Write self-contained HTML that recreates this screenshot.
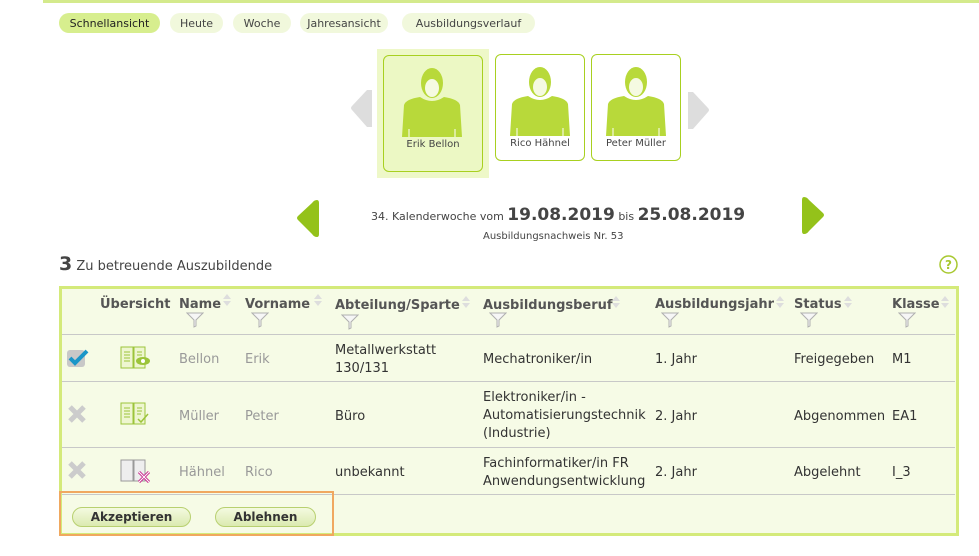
<!DOCTYPE html>
<html><head><meta charset="utf-8"><style>
*{margin:0;padding:0;box-sizing:border-box}
body{width:979px;height:556px;background:#fff;font-family:"DejaVu Sans","Liberation Sans",sans-serif;color:#444;position:relative;overflow:hidden}
.a{position:absolute;white-space:nowrap}
.tab{position:absolute;top:13px;height:20px;border-radius:10px;background:#f1f8dc;font-size:11px;line-height:21px;text-align:center;color:#444}
.card{position:absolute;border:1px solid #a8d020;border-radius:6px;background:#fff}
.cn{position:absolute;left:0;right:0;font-size:10px;text-align:center;color:#444}
.th{position:absolute;top:297px;font-size:13px;font-weight:bold;color:#555;white-space:nowrap}
.td{position:absolute;font-size:13px;color:#333;line-height:18px;white-space:nowrap}
.g{color:#999}
.hl{position:absolute;left:62px;width:893px;height:1px;background:#c8c8c8}
.btn{position:absolute;top:507px;height:20px;border:1px solid #b8d070;border-radius:10px;background:linear-gradient(#f4fae0,#dbeab0);font-size:12px;font-weight:bold;line-height:18px;text-align:center;color:#333}
</style></head><body>
<div class="a" style="left:43px;top:0;width:936px;height:3px;background:#d4ea8c"></div>
<div class="tab" style="left:59px;width:101px;background:#d7ee8e;color:#222">Schnellansicht</div>
<div class="tab" style="left:170px;width:53px">Heute</div>
<div class="tab" style="left:233px;width:58px">Woche</div>
<div class="tab" style="left:300px;width:88px">Jahresansicht</div>
<div class="tab" style="left:402px;width:133px">Ausbildungsverlauf</div>

<svg class="a" style="left:350px;top:90px" width="24" height="37"><path d="M22 0 L22 37 L17 37 L2 20 Q0 18 2 16 L17 0Z" fill="#ddd"/></svg>
<svg class="a" style="left:686px;top:92px" width="24" height="37"><path d="M2 0 L2 37 L7 37 L22 20 Q24 18 22 16 L7 0Z" fill="#ddd"/></svg>

<div class="a" style="left:377px;top:49px;width:112px;height:129px;background:#eef8c8"></div>
<div class="card" style="left:383px;top:55px;width:100px;height:117px;background:#ecf8c4"><div class="cn" style="top:83px">Erik Bellon</div></div>
<div class="card" style="left:495px;top:54px;width:90px;height:107px"><div class="cn" style="top:83px">Rico Hähnel</div></div>
<div class="card" style="left:591px;top:54px;width:90px;height:107px"><div class="cn" style="top:83px">Peter Müller</div></div>
<svg width="0" height="0" style="position:absolute"><defs><g id="av"><ellipse cx="32" cy="16" rx="11" ry="15" fill="#b8d93a"/><ellipse cx="32" cy="21" rx="7" ry="9" fill="#fff" opacity="0.85"/><path d="M24 14 Q32 8 40 14 L40 10 Q32 3 24 10Z" fill="#b8d93a"/><path d="M4 38 Q6 32 20 30 Q32 38 44 30 Q58 32 60 38 L62 70 L2 70Z" fill="#b8d93a"/><path d="M9 62 V70 M55 62 V70" stroke="#fff" stroke-width="1"/></g></defs></svg>
<svg class="a" style="left:400px;top:67px" width="64" height="70"><use href="#av"/></svg>
<svg class="a" style="left:508px;top:66px" width="64" height="70"><use href="#av"/></svg>
<svg class="a" style="left:604px;top:66px" width="64" height="70"><use href="#av"/></svg>

<svg class="a" style="left:296px;top:200px" width="23" height="37"><path d="M21 0 Q23 0 23 3 L23 34 Q23 37 21 37 Q18 37 16 34 L2 20 Q0 18 2 16 L16 3 Q18 0 21 0Z" fill="#94c21a"/></svg>
<svg class="a" style="left:802px;top:197px" width="23" height="37"><path d="M2 0 Q0 0 0 3 L0 34 Q0 37 2 37 Q5 37 7 34 L21 20 Q23 18 21 16 L7 3 Q5 0 2 0Z" fill="#94c21a"/></svg>
<div class="a" style="left:371px;top:205px;font-size:11px;color:#444">34. Kalenderwoche vom <b style="font-size:17px;color:#444">19.08.2019</b> bis <b style="font-size:17px;color:#444">25.08.2019</b></div>
<div class="a" style="left:483px;top:231px;font-size:10px;color:#444">Ausbildungsnachweis Nr. 53</div>

<div class="a" style="left:59px;top:253px;font-size:13px;color:#444"><b style="font-size:19px">3</b> Zu betreuende Auszubildende</div>
<svg class="a" style="left:938px;top:254px" width="21" height="21"><circle cx="10.5" cy="10.5" r="8.5" fill="none" stroke="#a8c830" stroke-width="1.5"/><text x="10.5" y="15" font-size="12" font-weight="bold" text-anchor="middle" fill="#a8c830" font-family="DejaVu Sans">?</text></svg>

<div class="a" style="left:59px;top:286px;width:900px;height:250px;border:3px solid #d4ea7a;background:#f6fbe6"></div>
<div class="hl" style="top:334px"></div>
<div class="hl" style="top:381px"></div>
<div class="hl" style="top:447px"></div>
<div class="hl" style="top:494px"></div>

<div class="th" style="left:100px">Übersicht</div>
<div class="th" style="left:179px">Name</div>
<div class="th" style="left:245px">Vorname</div>
<div class="th" style="left:335px;top:298px">Abteilung/Sparte</div>
<div class="th" style="left:483px;top:298px">Ausbildungsberuf</div>
<div class="th" style="left:655px">Ausbildungsjahr</div>
<div class="th" style="left:794px">Status</div>
<div class="th" style="left:892px">Klasse</div>
<svg width="0" height="0" style="position:absolute"><defs><g id="so"><path d="M1 5 L5 0 L9 5Z M1 7 L9 7 L5 12Z" fill="#ddd"/></g><g id="fi"><path d="M1 1 L17 1 L10 8 L10 14 L8 15 L8 8Z" fill="#f6f6f6" stroke="#b0b0b0"/></g></defs></svg>
<svg class="a" style="left:222px;top:294px" width="10" height="12"><use href="#so"/></svg>
<svg class="a" style="left:313px;top:294px" width="10" height="12"><use href="#so"/></svg>
<svg class="a" style="left:461px;top:296px" width="10" height="12"><use href="#so"/></svg>
<svg class="a" style="left:611px;top:296px" width="10" height="12"><use href="#so"/></svg>
<svg class="a" style="left:775px;top:296px" width="10" height="12"><use href="#so"/></svg>
<svg class="a" style="left:843px;top:296px" width="10" height="12"><use href="#so"/></svg>
<svg class="a" style="left:940px;top:296px" width="10" height="12"><use href="#so"/></svg>
<svg class="a" style="left:186px;top:312px" width="18" height="16"><use href="#fi"/></svg>
<svg class="a" style="left:251px;top:312px" width="18" height="16"><use href="#fi"/></svg>
<svg class="a" style="left:341px;top:314px" width="18" height="16"><use href="#fi"/></svg>
<svg class="a" style="left:489px;top:312px" width="18" height="16"><use href="#fi"/></svg>
<svg class="a" style="left:661px;top:312px" width="18" height="16"><use href="#fi"/></svg>
<svg class="a" style="left:800px;top:312px" width="18" height="16"><use href="#fi"/></svg>
<svg class="a" style="left:898px;top:312px" width="18" height="16"><use href="#fi"/></svg>

<!-- row1 -->
<svg class="a" style="left:67px;top:348px" width="22" height="20"><rect x="0" y="2" width="18" height="17" rx="3" fill="#c8c8c8"/><path d="M3 10 L8 15 L20 3" fill="none" stroke="#1a96c8" stroke-width="4"/></svg>
<svg class="a" style="left:120px;top:346px" width="30" height="24"><path d="M1 1 H13 V22 H1Z M14 1 H25 V22 H14Z" fill="#eef6d0" stroke="#9cc43a"/><path d="M4 6H10M4 9H10M4 12H10M4 15H10M17 6H22M17 9H22" stroke="#9cc43a"/><ellipse cx="23" cy="15" rx="7" ry="4" fill="#9cc43a"/><circle cx="23" cy="15" r="2" fill="#fff"/></svg>
<div class="td g" style="left:179px;top:351px">Bellon</div>
<div class="td g" style="left:245px;top:351px">Erik</div>
<div class="td" style="left:335px;top:342px">Metallwerkstatt<br>130/131</div>
<div class="td" style="left:483px;top:351px">Mechatroniker/in</div>
<div class="td" style="left:655px;top:351px">1. Jahr</div>
<div class="td" style="left:794px;top:351px">Freigegeben</div>
<div class="td" style="left:892px;top:351px">M1</div>
<!-- row2 -->
<svg class="a" style="left:68px;top:405px" width="18" height="18"><path d="M2 2 L16 16 M16 2 L2 16" stroke="#ccc" stroke-width="5"/></svg>
<svg class="a" style="left:120px;top:402px" width="30" height="24"><path d="M1 1 H13 V22 H1Z M14 1 H25 V22 H14Z" fill="#eef6d0" stroke="#9cc43a"/><path d="M4 6H10M4 9H10M4 12H10M4 15H10M17 6H22M17 9H22M17 12H21" stroke="#9cc43a"/><path d="M18 17 L21 20 L28 12" fill="none" stroke="#9cc43a" stroke-width="1.5"/></svg>
<div class="td g" style="left:179px;top:408px">Müller</div>
<div class="td g" style="left:245px;top:408px">Peter</div>
<div class="td" style="left:335px;top:408px">Büro</div>
<div class="td" style="left:483px;top:389px">Elektroniker/in -<br>Automatisierungstechnik<br>(Industrie)</div>
<div class="td" style="left:655px;top:408px">2. Jahr</div>
<div class="td" style="left:794px;top:408px">Abgenommen</div>
<div class="td" style="left:892px;top:408px">EA1</div>
<!-- row3 -->
<svg class="a" style="left:68px;top:461px" width="18" height="18"><path d="M2 2 L16 16 M16 2 L2 16" stroke="#ccc" stroke-width="5"/></svg>
<svg class="a" style="left:120px;top:459px" width="32" height="24"><path d="M1 1 H13 V22 H1Z M14 1 H25 V22 H14Z" fill="#eee" stroke="#999"/><path d="M19 13 L29 23 M29 13 L19 23" stroke="#c8288c" stroke-width="3"/><path d="M19 13 L29 23 M29 13 L19 23" stroke="#fff" stroke-width="1"/></svg>
<div class="td g" style="left:179px;top:464px">Hähnel</div>
<div class="td g" style="left:245px;top:464px">Rico</div>
<div class="td" style="left:335px;top:464px">unbekannt</div>
<div class="td" style="left:483px;top:455px">Fachinformatiker/in FR<br>Anwendungsentwicklung</div>
<div class="td" style="left:655px;top:464px">2. Jahr</div>
<div class="td" style="left:794px;top:464px">Abgelehnt</div>
<div class="td" style="left:892px;top:464px">I_3</div>

<div class="a" style="left:59px;top:491px;width:275px;height:45px;border:2px solid #f0a860"></div>
<div class="btn" style="left:72px;width:119px">Akzeptieren</div>
<div class="btn" style="left:215px;width:101px">Ablehnen</div>
</body></html>
